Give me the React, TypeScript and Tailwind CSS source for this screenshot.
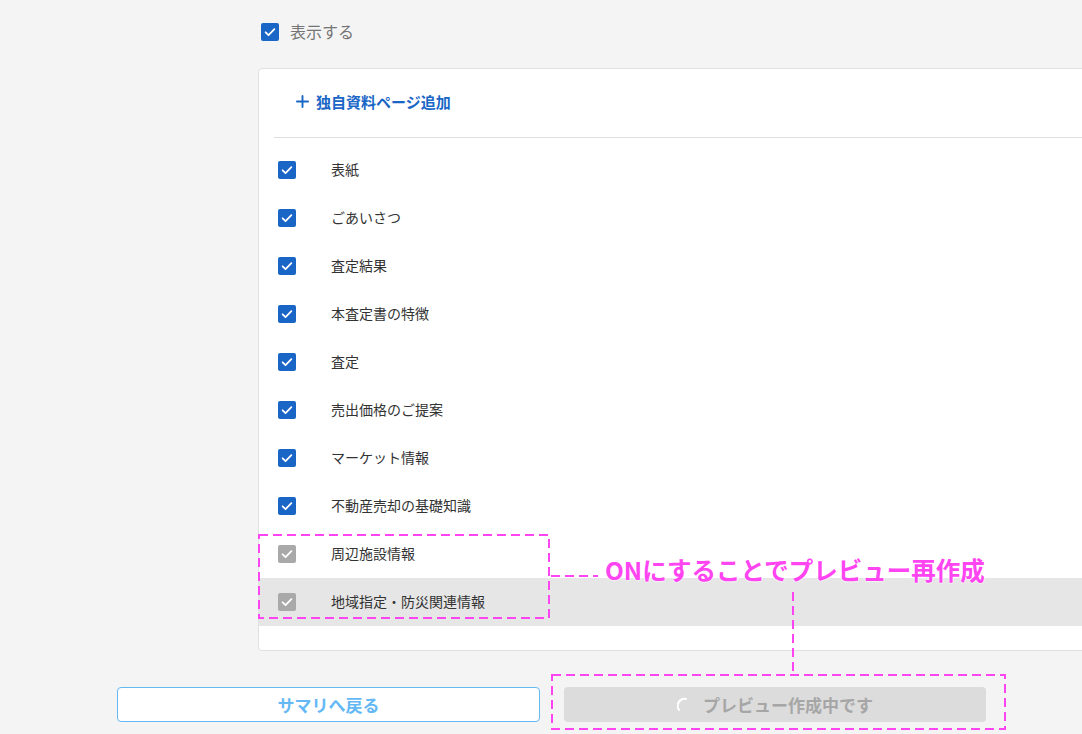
import { Plus } from "lucide-react";

const rows = [
  { label: "表紙", on: true },
  { label: "ごあいさつ", on: true },
  { label: "査定結果", on: true },
  { label: "本査定書の特徴", on: true },
  { label: "査定", on: true },
  { label: "売出価格のご提案", on: true },
  { label: "マーケット情報", on: true },
  { label: "不動産売却の基礎知識", on: true },
  { label: "周辺施設情報", on: false },
  { label: "地域指定・防災関連情報", on: false, active: true },
];

function Check({ disabled = false }: { disabled?: boolean }) {
  return (
    <span
      className={`flex h-[18px] w-[18px] shrink-0 items-center justify-center rounded-[2px] ${
        disabled ? "bg-[#a9a9a9]" : "bg-[#1a66c6]"
      }`}
    >
      <svg width="14" height="14" viewBox="0 0 24 24" fill="none">
        <path
          d="M4.5 12.5l5 5L19.5 7"
          stroke="white"
          strokeWidth="3"
          strokeLinecap="round"
          strokeLinejoin="round"
        />
      </svg>
    </span>
  );
}

export default function App() {
  return (
    <div className="relative h-[734px] w-[1082px] overflow-hidden bg-[#f4f4f4] font-['Noto_Sans_CJK_JP','Noto_Sans',sans-serif]">
      {/* show toggle */}
      <div className="flex items-center gap-[11px] pl-[261px] pt-[23px]">
        <Check />
        <span className="-mt-[3px] text-[16px] leading-[18px] text-[#757575]">表示する</span>
      </div>

      {/* page list card */}
      <div className="ml-[258px] mt-[27px] w-[860px] rounded-[4px] border border-[#e0e0e0] bg-white pb-[24px]">
        <div className="flex h-[68px] items-center pl-[34px]">
          <button className="-mt-[4px] flex items-center gap-[4px] text-[15px] font-bold leading-none text-[#1a66c6]">
            <Plus className="h-[19px] w-[19px]" strokeWidth={2.4} />
            独自資料ページ追加
          </button>
        </div>
        <div className="ml-[15px] border-t border-[#e0e0e0]" />
        <div className="pt-[8px]">
          {rows.map((r) => (
            <div
              key={r.label}
              className={`flex h-[48px] items-center pl-[19px] ${r.active ? "bg-[#e6e6e6]" : ""}`}
            >
              <Check disabled={!r.on} />
              <span className="-mt-[3px] ml-[35px] text-[14px] leading-none text-[#333333]">{r.label}</span>
            </div>
          ))}
        </div>
      </div>

      {/* actions */}
      <div className="mt-[36px] flex gap-[24px] pl-[117px]">
        <button className="flex h-[35px] w-[423px] items-center justify-center rounded-[4px] border border-[#64b8f4] bg-white text-[17px] font-bold text-[#64b8f4]">
          サマリへ戻る
        </button>
        <button className="flex h-[35px] w-[422px] items-center justify-center gap-[10px] rounded-[4px] bg-[#dcdcdc] text-[17px] font-bold text-[#a6a6a6]">
          <svg width="16" height="16" viewBox="0 0 16 16" fill="none">
            <path d="M2 13A7 7 0 0 1 9 2" stroke="white" strokeWidth="2" strokeLinecap="round" />
          </svg>
          プレビュー作成中です
        </button>
      </div>

      {/* annotation overlay */}
      <svg
        className="pointer-events-none absolute left-0 top-0"
        width="1082"
        height="734"
        viewBox="0 0 1082 734"
        fill="none"
      >
        <g stroke="#ff44f2" strokeWidth="2" strokeDasharray="9 5">
          <rect x="259" y="535" width="290" height="83" />
          <line x1="551" y1="576" x2="598" y2="576" />
          <line x1="793" y1="592" x2="793" y2="675" />
          <rect x="552" y="675" width="453" height="54" />
        </g>
      </svg>
      <div className="pointer-events-none absolute left-[605px] top-[557px] text-[24.5px] font-bold leading-[26px] text-[#ff44f2] [text-shadow:0_0_2px_#fff,0_0_2px_#fff]">
        ONにすることでプレビュー再作成
      </div>
    </div>
  );
}
